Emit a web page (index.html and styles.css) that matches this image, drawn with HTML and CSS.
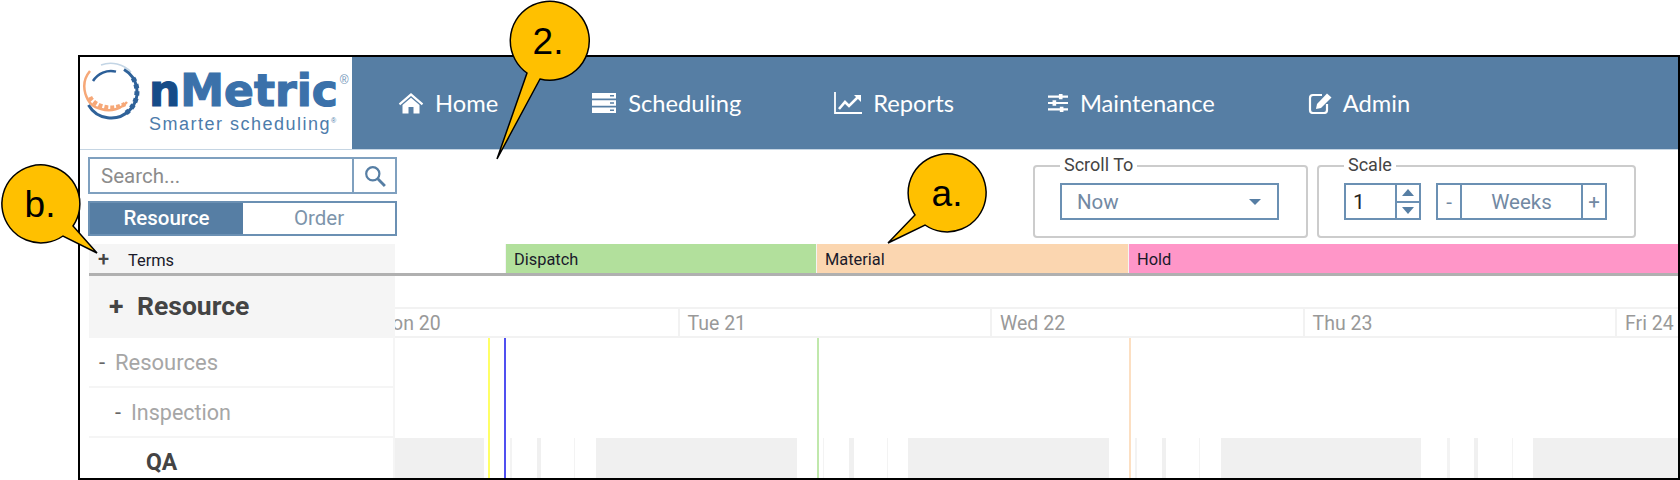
FILE: index.html
```html
<!DOCTYPE html>
<html lang="en">
<head>
    <meta charset="UTF-8">
    <title>nMetric Scheduling</title>
    <link rel="stylesheet" href="styles.css">
</head>
<body>
    <div class="frame">
        <!-- Top bar -->
        <header class="topbar">
            <div class="logo">
                <svg class="logo-ring" viewBox="0 0 60 60" width="60" height="60">
                    <path d="M20 3 A28 28 0 0 1 50 10" fill="none" stroke="#c3d5e5" stroke-width="1.5"/>
                    <path d="M12 19 A21 21 0 0 1 35 9.6" fill="none" stroke="#2c5f98" stroke-width="2.5"/>
                    <path d="M7.5 43 A26 26 0 1 0 43 7.5" fill="none" stroke="#2f6299" stroke-width="3"/>
                    <path d="M52 16 A26 26 0 0 1 45 51" fill="none" stroke="#2f6299" stroke-width="5" stroke-dasharray="4 3"/>
                    <path d="M9 9 C-2 22 4 44 20 47 C30 50 40 47 46 40" fill="none" stroke="#f6a878" stroke-width="2.5"/>
                    <path d="M9 35 C13 44 30 50 44 42" fill="none" stroke="#f6a878" stroke-width="4.5" stroke-dasharray="4 2"/>
                </svg>
                <div class="logo-text">
                    <div class="logo-name"><span class="logo-n">n</span>Metric<sup class="logo-reg">®</sup></div>
                    <div class="logo-tag">Smarter scheduling<sup class="logo-tm">®</sup></div>
                </div>
            </div>
            <nav class="nav">
                <a class="nav-item">
                    <svg class="nav-icon" viewBox="0 0 26 22" width="26" height="22">
                        <path d="M0.8 11.5 L13 1 L25.2 11.5 L23.8 13.2 L13 4 L2.2 13.2 Z" fill="#fff"/>
                        <path d="M4.5 13 L13 5.8 L21.5 13 V21.5 H15.5 V15 H10.5 V21.5 H4.5 Z" fill="#fff"/>
                    </svg>
                    Home
                </a>
                <a class="nav-item">
                    <svg class="nav-icon" viewBox="0 0 26 22" width="26" height="22">
                        <path d="M1 1 H25 V6.5 H1 Z M1 8.2 H25 V13.8 H1 Z M1 15.5 H25 V21 H1 Z" fill="#fff"/>
                        <path d="M19 3 H23 V4.4 H19 Z M19 10.3 H23 V11.7 H19 Z M19 17.6 H23 V19 H19 Z" fill="#567ea4"/>
                    </svg>
                    Scheduling
                </a>
                <a class="nav-item">
                    <svg class="nav-icon" viewBox="0 0 28 22" width="28" height="22">
                        <path d="M1 0 V21 H28" fill="none" stroke="#fff" stroke-width="1.8"/>
                        <path d="M5 17 L11 10 L15 14 L24 5" fill="none" stroke="#fff" stroke-width="2.6"/>
                        <path d="M20 3 H27 V10 Z" fill="#fff"/>
                    </svg>
                    Reports
                </a>
                <a class="nav-item">
                    <svg class="nav-icon" viewBox="0 0 22 22" width="22" height="20">
                        <path d="M0 4 H22 M0 11 H22 M0 18 H22" stroke="#fff" stroke-width="2.4"/>
                        <path d="M12 1 H16 V7 H12 Z M5 8 H9 V14 H5 Z M13 15 H17 V21 H13 Z" fill="#fff"/>
                    </svg>
                    Maintenance
                </a>
                <a class="nav-item">
                    <svg class="nav-icon" viewBox="0 0 24 22" width="24" height="22">
                        <path d="M14 3 H5 Q2 3 2 6 V18 Q2 21 5 21 H16 Q19 21 19 18 V12" fill="none" stroke="#fff" stroke-width="2.2"/>
                        <path d="M9 12 L19 1.5 L23.5 5.5 L13 16 L8 17 Z" fill="#fff"/>
                    </svg>
                    Admin
                </a>
            </nav>
        </header>

        <!-- Search + scale controls -->
        <div class="toolbar">
            <div class="side-controls">
                <div class="search">
                    <span class="search-input">Search...</span>
                    <span class="search-btn">
                        <svg viewBox="0 0 20 20" width="22" height="22">
                            <circle cx="8" cy="8" r="6" fill="none" stroke="#567ea4" stroke-width="2"/>
                            <path d="M12.5 12.5 L19 19" stroke="#567ea4" stroke-width="2.6"/>
                        </svg>
                    </span>
                </div>
                <div class="toggle">
                    <span class="toggle-btn active">Resource</span>
                    <span class="toggle-btn">Order</span>
                </div>
            </div>
            <div class="controls">
                <fieldset class="group group-scroll">
                    <legend>Scroll To</legend>
                    <div class="select">Now<span class="caret"></span></div>
                </fieldset>
                <fieldset class="group group-scale">
                    <legend>Scale</legend>
                    <div class="scale-row">
                        <div class="number">
                            <span class="number-val">1</span>
                            <span class="spinner">
                                <span class="spin"><span class="arrow-up"></span></span>
                                <span class="spin"><span class="arrow-down"></span></span>
                            </span>
                        </div>
                        <div class="stepper">
                            <span class="step">-</span>
                            <span class="step-label">Weeks</span>
                            <span class="step">+</span>
                        </div>
                    </div>
                </fieldset>
            </div>
        </div>

        <!-- Terms strip -->
        <div class="terms">
            <div class="terms-head"><span class="terms-plus">+</span>Terms</div>
            <div class="term term-blank"></div>
            <div class="term term-dispatch">Dispatch</div>
            <div class="term term-material">Material</div>
            <div class="term term-hold">Hold</div>
        </div>

        <div class="main">
            <aside class="sidebar">
                <div class="side-head"><span class="side-plus">+</span>Resource</div>
                <div class="side-row level-1"><span class="dash">-</span>Resources</div>
                <div class="side-row level-2"><span class="dash">-</span>Inspection</div>
                <div class="side-row level-3">QA</div>
            </aside>
            <section class="gantt">
                <div class="days">
                    <div class="day day-first">Mon 20</div>
                    <div class="day">Tue 21</div>
                    <div class="day">Wed 22</div>
                    <div class="day">Thu 23</div>
                    <div class="day">Fri 24</div>
                </div>
                <div class="chart">
                    <div class="shifts"></div>
                    <span class="marker marker-yellow"></span>
                    <span class="marker marker-blue"></span>
                    <span class="marker marker-green"></span>
                    <span class="marker marker-orange"></span>
                </div>
            </section>
        </div>
    </div>

    <!-- Callouts drawn over the screenshot -->
    <svg class="callouts" viewBox="0 0 1680 480" width="1680" height="480">
        <path class="bubble" d="M527 73 A39.5 39.5 0 1 1 540 79 L497 159 Z"/>
        <text class="bubble-text" x="548" y="54">2.</text>
        <path class="bubble" d="M915 215 A39 39 0 1 1 925 225 L888 243 Z"/>
        <text class="bubble-text" x="947" y="206">a.</text>
        <path class="bubble" d="M63 236 A39 39 0 1 1 73 226 L97 253 Z"/>
        <text class="bubble-text" x="40" y="217">b.</text>
    </svg>
</body>
</html>
```

FILE: styles.css
```css
html, body {
    margin: 0;
    height: 480px;
    overflow: hidden;
    background: #fff;
}

body {
    font-family: 'Roboto', sans-serif;
}

.frame {
    box-sizing: border-box;
    width: 1602px;
    height: 425px;
    margin: 55px 0 0 78px;
    border: 2px solid #000;
    display: flex;
    flex-direction: column;
    overflow: hidden;
}

/* Top bar */
.topbar {
    display: flex;
    height: 92px;
    flex: none;
    background-color: #567ea4;
    border-bottom: 1px solid #c5d5e3;
    box-sizing: content-box;
}

.logo {
    width: 272px;
    flex: none;
    background-color: #fff;
    display: flex;
    align-items: flex-start;
}

.logo-ring {
    margin: 5px 0 0 1px;
    flex: none;
}

.logo-text {
    margin: 12px 0 0 8px;
}

.logo-name {
    font-family: 'DejaVu Sans', sans-serif;
    font-weight: 700;
    font-size: 44px;
    line-height: 44px;
    color: #3b71aa;
    -webkit-text-stroke: 1.2px currentColor;
    white-space: nowrap;
}

.logo-n {
    color: #164c88;
}

.logo-reg {
    font-family: 'Liberation Sans', sans-serif;
    font-weight: 400;
    font-size: 12px;
    line-height: 12px;
    color: #6f94b8;
    -webkit-text-stroke: 0;
    vertical-align: 22px;
    margin-left: 2px;
}

.logo-tag {
    font-family: 'Liberation Sans', sans-serif;
    font-size: 18px;
    line-height: 20px;
    margin-top: 1px;
    letter-spacing: 1.5px;
    color: #4d7cab;
    white-space: nowrap;
}

.logo-tm {
    font-size: 7px;
    line-height: 7px;
}

.nav {
    display: flex;
    align-items: center;
    gap: 93px;
    padding-left: 46px;
}

.nav-item {
    display: flex;
    align-items: center;
    gap: 11px;
    font-family: 'Lato', sans-serif;
    font-size: 23.7px;
    color: #fff;
    white-space: nowrap;
}

/* Toolbar */
.toolbar {
    display: flex;
    justify-content: space-between;
    height: 94px;
    flex: none;
    box-sizing: border-box;
    padding: 7px 42px 0 8px;
}

.side-controls {
    width: 309px;
}

.search {
    box-sizing: border-box;
    display: flex;
    height: 37px;
    border: 2px solid #7fa0bf;
}

.search-input {
    flex: 1;
    padding-left: 11px;
    font-size: 20.5px;
    line-height: 35px;
    color: #8c8c8c;
}

.search-btn {
    width: 41px;
    border-left: 2px solid #7fa0bf;
    display: flex;
    align-items: center;
    justify-content: center;
}

.toggle {
    box-sizing: border-box;
    display: flex;
    height: 35px;
    margin-top: 7px;
    border: 2px solid #6b90b3;
}

.toggle-btn {
    flex: 1;
    text-align: center;
    font-size: 20.5px;
    line-height: 31px;
    color: #7d94ab;
}

.toggle-btn.active {
    flex: none;
    width: 153px;
    background-color: #567ea4;
    color: #fff;
    font-weight: 500;
}

.controls {
    display: flex;
    gap: 9px;
}

.group {
    box-sizing: border-box;
    height: 83px;
    margin: -2px 0 0;
    padding: 6px 25px 0;
    border: 2px solid #ccc;
    border-radius: 4px;
    min-width: 0;
}

.group legend {
    padding: 0 4px 2px;
    margin-left: 0;
    font-size: 18px;
    line-height: 20px;
    color: #444;
}

.group-scroll {
    width: 275px;
}

.group-scale {
    width: 319px;
}

.select {
    box-sizing: border-box;
    width: 219px;
    height: 37px;
    border: 2px solid #6b90b3;
    padding-left: 15px;
    font-size: 20.5px;
    line-height: 34px;
    color: #7289a3;
    position: relative;
}

.caret {
    position: absolute;
    right: 16px;
    top: 14px;
    border-left: 6px solid transparent;
    border-right: 6px solid transparent;
    border-top: 6px solid #567ea4;
}

.scale-row {
    display: flex;
    gap: 15px;
}

.number {
    box-sizing: border-box;
    display: flex;
    width: 77px;
    height: 37px;
    border: 2px solid #6b90b3;
}

.number-val {
    flex: 1;
    padding-left: 7px;
    font-size: 21px;
    line-height: 34px;
    color: #222;
}

.spinner {
    width: 22px;
    border-left: 2px solid #6b90b3;
    display: flex;
    flex-direction: column;
}

.spin {
    flex: 1;
    display: flex;
    align-items: center;
    justify-content: center;
}

.spin + .spin {
    border-top: 2px solid #6b90b3;
}

.arrow-up {
    border-left: 6px solid transparent;
    border-right: 6px solid transparent;
    border-bottom: 7px solid #567ea4;
}

.arrow-down {
    border-left: 6px solid transparent;
    border-right: 6px solid transparent;
    border-top: 7px solid #567ea4;
}

.stepper {
    box-sizing: border-box;
    display: flex;
    width: 171px;
    height: 37px;
    border: 2px solid #6b90b3;
    color: #7289a3;
    font-size: 20.5px;
    line-height: 34px;
    text-align: center;
}

.step {
    width: 22px;
}

.step-label {
    flex: 1;
    border-left: 2px solid #6b90b3;
    border-right: 2px solid #6b90b3;
}

/* Terms strip */
.terms {
    display: flex;
    height: 29px;
    flex: none;
    margin-left: 9px;
    border-bottom: 3px solid #b0b0b0;
    box-sizing: content-box;
    font-size: 16.4px;
    font-weight: 400;
    line-height: 31px;
    color: #1a1a2a;
}

.terms-head {
    width: 306px;
    flex: none;
    box-sizing: border-box;
    padding-left: 9px;
    background-color: #f5f5f5;
}

.terms-plus {
    display: inline-block;
    width: 30px;
    font-size: 20px;
    font-weight: 500;
    color: #444;
}

.term {
    box-sizing: border-box;
    padding-left: 8px;
    flex: none;
    border-right: 1px solid #f4f4f4;
}

.term-blank {
    width: 111px;
}

.term-dispatch {
    width: 311px;
    background-color: #b2e09c;
}

.term-material {
    width: 312px;
    background-color: #fbd6b0;
}

.term-hold {
    flex: 1;
    background-color: #ff96c8;
    border-right: 0;
}

/* Lower area */
.main {
    display: flex;
    flex: 1;
    min-height: 0;
    margin-left: 9px;
}

.sidebar {
    width: 306px;
    flex: none;
}

.side-head {
    height: 62px;
    background-color: #f5f5f5;
    padding-left: 20px;
    font-size: 26.5px;
    font-weight: 700;
    line-height: 60px;
    color: #444;
}

.side-plus {
    display: inline-block;
    width: 28px;
}

.side-row {
    box-sizing: border-box;
    height: 50px;
    border-bottom: 2px solid #f5f5f5;
    border-right: 2px solid #f5f5f5;
    font-size: 21.5px;
    line-height: 50px;
    color: #a6a6a6;
}

.dash {
    display: inline-block;
    width: 16px;
    color: #666;
}

.level-1 {
    padding-left: 10px;
    font-size: 22px;
}

.level-2 {
    padding-left: 26px;
}

.level-3 {
    padding-left: 57px;
    font-size: 23px;
    font-weight: 700;
    color: #444;
    border-bottom: 0;
}

.gantt {
    flex: 1;
    min-width: 0;
    display: flex;
    flex-direction: column;
    padding-top: 31px;
    overflow: hidden;
}

.days {
    display: flex;
    height: 31px;
    flex: none;
    box-sizing: border-box;
    border-top: 2px solid #f2f2f2;
    border-bottom: 2px solid #f2f2f2;
    margin-left: -30px;
}

.day {
    box-sizing: border-box;
    width: 312.5px;
    flex: none;
    padding-left: 8px;
    border-left: 2px solid #f2f2f2;
    font-size: 19.5px;
    line-height: 29px;
    color: #999;
}

.day-first {
    border-left: 0;
    padding-left: 10px;
}

.chart {
    flex: 1;
    position: relative;
}

.shifts {
    position: absolute;
    left: 0;
    right: 0;
    top: 100px;
    bottom: 0;
    background-image: repeating-linear-gradient(90deg,
        #f0f0f0 0, #f0f0f0 89px,
        #fff 89px, #fff 115px,
        #f3f3f3 115px, #f3f3f3 117px,
        #fff 117px, #fff 141.5px,
        #f0f0f0 141.5px, #f0f0f0 146px,
        #fff 146px, #fff 179px,
        #f3f3f3 179px, #f3f3f3 180.5px,
        #fff 180.5px, #fff 200.5px,
        #f0f0f0 200.5px, #f0f0f0 312.5px);
}

.marker {
    position: absolute;
    top: 0;
    bottom: 0;
    width: 2px;
}

.marker-yellow {
    left: 93px;
    background-color: #ffff66;
}

.marker-blue {
    left: 109px;
    background-color: #5050f0;
}

.marker-green {
    left: 422px;
    background-color: #c0e8ac;
}

.marker-orange {
    left: 734px;
    background-color: #fcdfc2;
}

/* Callouts */
.callouts {
    position: absolute;
    left: 0;
    top: 0;
}

.bubble {
    fill: #ffc000;
    stroke: #000;
    stroke-width: 1.5;
}

.bubble-text {
    font-family: 'Liberation Sans', sans-serif;
    font-size: 37px;
    text-anchor: middle;
    fill: #000;
}
```
